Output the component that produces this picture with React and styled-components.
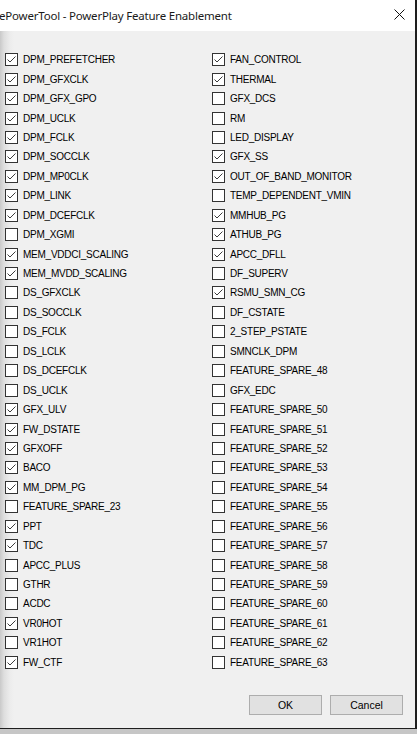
import React from 'react';
import styled, { createGlobalStyle } from 'styled-components';

const GlobalStyle = createGlobalStyle`
  html, body {
    margin: 0;
    padding: 0;
    width: 417px;
    height: 734px;
    overflow: hidden;
    background: #1e1e1e;
  }
`;

const leftFeatures = [
  ['DPM_PREFETCHER', true],
  ['DPM_GFXCLK', true],
  ['DPM_GFX_GPO', true],
  ['DPM_UCLK', true],
  ['DPM_FCLK', true],
  ['DPM_SOCCLK', true],
  ['DPM_MP0CLK', true],
  ['DPM_LINK', true],
  ['DPM_DCEFCLK', true],
  ['DPM_XGMI', false],
  ['MEM_VDDCI_SCALING', true],
  ['MEM_MVDD_SCALING', true],
  ['DS_GFXCLK', false],
  ['DS_SOCCLK', false],
  ['DS_FCLK', false],
  ['DS_LCLK', false],
  ['DS_DCEFCLK', false],
  ['DS_UCLK', false],
  ['GFX_ULV', true],
  ['FW_DSTATE', true],
  ['GFXOFF', true],
  ['BACO', true],
  ['MM_DPM_PG', true],
  ['FEATURE_SPARE_23', false],
  ['PPT', true],
  ['TDC', true],
  ['APCC_PLUS', false],
  ['GTHR', false],
  ['ACDC', false],
  ['VR0HOT', true],
  ['VR1HOT', false],
  ['FW_CTF', true],
];

const rightFeatures = [
  ['FAN_CONTROL', true],
  ['THERMAL', true],
  ['GFX_DCS', false],
  ['RM', false],
  ['LED_DISPLAY', false],
  ['GFX_SS', true],
  ['OUT_OF_BAND_MONITOR', true],
  ['TEMP_DEPENDENT_VMIN', false],
  ['MMHUB_PG', true],
  ['ATHUB_PG', true],
  ['APCC_DFLL', true],
  ['DF_SUPERV', false],
  ['RSMU_SMN_CG', true],
  ['DF_CSTATE', false],
  ['2_STEP_PSTATE', false],
  ['SMNCLK_DPM', false],
  ['FEATURE_SPARE_48', false],
  ['GFX_EDC', false],
  ...Array.from({ length: 14 }, (_, i) => [`FEATURE_SPARE_${50 + i}`, false]),
];

const CheckItem = ({ label, checked }) => (
  <Row>
    <Box>
      {checked && (
        <svg width="11" height="11" viewBox="0 0 11 11">
          <polyline points="1.5,5.5 4,8 9.5,2.5" fill="none" stroke="#3c3c3c" strokeWidth="1" />
        </svg>
      )}
    </Box>
    <Label>{label}</Label>
  </Row>
);

const App = () => {
  return (
    <Screen>
      <GlobalStyle />
      <Window>
        <TitleBar>
          <Title>ePowerTool - PowerPlay Feature Enablement</Title>
          <CloseIcon width="11" height="11" viewBox="0 0 11 11">
            <path d="M0.5 0.5 L10.5 10.5 M10.5 0.5 L0.5 10.5" stroke="#111" strokeWidth="1" />
          </CloseIcon>
        </TitleBar>
        <Body>
          <Columns>
            <Column>
              {leftFeatures.map(([name, on]) => (
                <CheckItem key={name} label={name} checked={on} />
              ))}
            </Column>
            <Column>
              {rightFeatures.map(([name, on]) => (
                <CheckItem key={name} label={name} checked={on} />
              ))}
            </Column>
          </Columns>
          <ButtonBar>
            <Button>OK</Button>
            <Button>Cancel</Button>
          </ButtonBar>
        </Body>
      </Window>
      <BottomShade />
    </Screen>
  );
};

export default App;

const Screen = styled.div`
  width: 417px;
  height: 734px;
  display: flex;
  flex-direction: column;
  background: #1e1e1e;
`;

const Window = styled.div`
  width: 415px;
  height: 728px;
  display: flex;
  flex-direction: column;
  background: #f0f0f0;
  font-family: "Liberation Sans", Arial, sans-serif;
`;

const TitleBar = styled.div`
  height: 31px;
  flex-shrink: 0;
  background: #ffffff;
  display: flex;
  align-items: center;
  justify-content: space-between;
  padding-right: 10px;
`;

const Title = styled.span`
  font-family: "Noto Sans", "Open Sans", sans-serif;
  font-size: 11.5px;
  letter-spacing: -0.2px;
  color: #1a1a1a;
  white-space: nowrap;
  margin-left: -1px;
  margin-top: -1px;
`;

const CloseIcon = styled.svg`
  margin-top: -3px;
`;

const Body = styled.div`
  flex: 1;
  display: flex;
  flex-direction: column;
  background: linear-gradient(to right, #c9c9c9 0px, #dedede 4px, #ececec 10px, #f0f0f0 14px);
`;

const Columns = styled.div`
  display: grid;
  grid-template-columns: 207px 1fr;
  padding: 19px 0 0 5px;
`;

const Column = styled.div`
  display: grid;
  grid-auto-rows: 19.45px;
`;

const Row = styled.div`
  display: flex;
  align-items: center;
  gap: 5px;
`;

const Box = styled.span`
  width: 11px;
  height: 11px;
  border: 1px solid #333;
  background: #fff;
  display: flex;
  flex-shrink: 0;
`;

const Label = styled.span`
  font-size: 10px;
  letter-spacing: -0.25px;
  color: #000;
  white-space: nowrap;
`;

const ButtonBar = styled.div`
  margin-top: auto;
  display: flex;
  justify-content: flex-end;
  gap: 8px;
  padding: 0 12px 13px 0;
`;

const Button = styled.button`
  width: 73px;
  height: 20px;
  background: #e1e1e1;
  border: 1px solid #adadad;
  font-family: "Liberation Sans", Arial, sans-serif;
  font-size: 10.5px;
  color: #000;
  padding: 0;
`;

const BottomShade = styled.div`
  flex: 1;
  margin-top: 1px;
  background: #c6c6c6;
`;
